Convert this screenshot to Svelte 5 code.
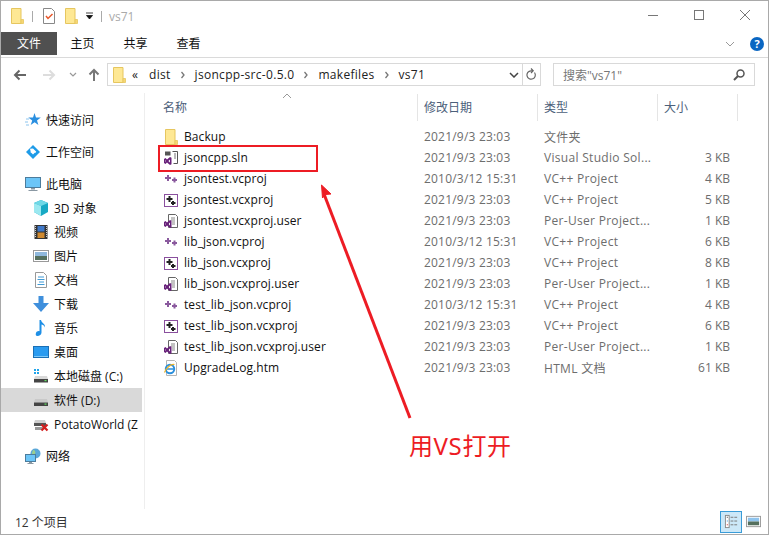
<script>
  const files = [
    { name: 'Backup', date: '2021/9/3 23:03', type: '文件夹', size: '', icon: 'folder' },
    { name: 'jsoncpp.sln', date: '2021/9/3 23:03', type: 'Visual Studio Sol...', size: '3 KB', icon: 'sln' },
    { name: 'jsontest.vcproj', date: '2010/3/12 15:31', type: 'VC++ Project', size: '4 KB', icon: 'plus' },
    { name: 'jsontest.vcxproj', date: '2021/9/3 23:03', type: 'VC++ Project', size: '5 KB', icon: 'boxplus' },
    { name: 'jsontest.vcxproj.user', date: '2021/9/3 23:03', type: 'Per-User Project...', size: '1 KB', icon: 'user' },
    { name: 'lib_json.vcproj', date: '2010/3/12 15:31', type: 'VC++ Project', size: '6 KB', icon: 'plus' },
    { name: 'lib_json.vcxproj', date: '2021/9/3 23:03', type: 'VC++ Project', size: '8 KB', icon: 'boxplus' },
    { name: 'lib_json.vcxproj.user', date: '2021/9/3 23:03', type: 'Per-User Project...', size: '1 KB', icon: 'user' },
    { name: 'test_lib_json.vcproj', date: '2010/3/12 15:31', type: 'VC++ Project', size: '4 KB', icon: 'plus' },
    { name: 'test_lib_json.vcxproj', date: '2021/9/3 23:03', type: 'VC++ Project', size: '6 KB', icon: 'boxplus' },
    { name: 'test_lib_json.vcxproj.user', date: '2021/9/3 23:03', type: 'Per-User Project...', size: '1 KB', icon: 'user' },
    { name: 'UpgradeLog.htm', date: '2021/9/3 23:03', type: 'HTML 文档', size: '61 KB', icon: 'ie' },
  ]

  const nav = [
    { label: '快速访问', icon: 'star', top: true },
    { label: '工作空间', icon: 'work', top: true },
    { label: '此电脑', icon: 'pc', top: true },
    { label: '3D 对象', icon: 'cube' },
    { label: '视频', icon: 'film' },
    { label: '图片', icon: 'pic' },
    { label: '文档', icon: 'doc' },
    { label: '下载', icon: 'down' },
    { label: '音乐', icon: 'note' },
    { label: '桌面', icon: 'desk' },
    { label: '本地磁盘 (C:)', icon: 'diskc' },
    { label: '软件 (D:)', icon: 'disk', selected: true },
    { label: 'PotatoWorld (Z', icon: 'netdisk' },
    { label: '网络', icon: 'net', top: true },
  ]
</script>

{#snippet folder(cls = 'i16')}
  <svg class={cls} viewBox="0 0 16 16">
    <path d="M2.500 .5h9.500v15H2.500z" fill="#fee894" stroke="#e6c65f"/>
    <path d="M12 11.500h2.500v4H12z" fill="#f7d774" stroke="#e6c65f" stroke-width=".8"/>
  </svg>
{/snippet}

{#snippet chev()}
  <svg class="chev" viewBox="0 0 4 8"><path d="M.5 1L3 4 .5 7" fill="none" stroke="#777" stroke-width="1.300"/></svg>
{/snippet}

{#snippet vs(x, y)}
  <path transform="translate({x} {y})" d="M0 2l1.500-1 1.500 1.600L6 0l1.500.8v6.400L6 8 3 5.400 1.500 7 0 6zM1 3.200v1.600l.9-.8zM6 2.600L4.400 4 6 5.400z" fill="#68217a"/>
{/snippet}

{#snippet fileIcon(kind)}
  {#if kind === 'folder'}
    {@render folder()}
  {:else if kind === 'sln'}
    <svg class="i16" viewBox="0 0 16 16">
      <path d="M2 1.500h5.500v4H2zM2 1.500h5.500v1.500H2z" fill="#555"/>
      <path d="M9.500 1.500h5v12h-4" fill="#fff" stroke="#555"/>
      <path d="M11 4h2M11 6h2M11 8h2" stroke="#777"/>
      {@render vs(1, 7)}
    </svg>
  {:else if kind === 'plus'}
    <svg class="i16" viewBox="0 0 16 16">
      <path d="M2 6h2V4h2v2h2v2H6v2H4V8H2z" fill="#8a5a9e"/>
      <path d="M9 8h1.500V6.500h2V8H14v2h-1.500v1.500h-2V10H9z" fill="#8a5a9e"/>
    </svg>
  {:else if kind === 'boxplus'}
    <svg class="i16" viewBox="0 0 16 16">
      <rect x="1.500" y="2.500" width="13" height="12" fill="#fff" stroke="#8a4f9e"/>
      <path d="M3.500 6h2V4h2v2h2v2h-2v2h-2V8h-2z" fill="#222"/>
      <path d="M8 10h1V9h2v1h1.500v2H11v1H9v-1H8z" fill="#222"/>
    </svg>
  {:else if kind === 'user'}
    <svg class="i16" viewBox="0 0 16 16">
      <path d="M5.500 1.500h7l2 2v11h-9z" fill="#fff" stroke="#666"/>
      <path d="M8 5h4M8 7h4M9 9h3M9 11h3" stroke="#888"/>
      {@render vs(1, 7)}
    </svg>
  {:else}
    <svg class="i16" viewBox="0 0 16 16">
      <path d="M3.500 .5h8l2 2v13h-10z" fill="#fff" stroke="#b5b5b5"/>
      <circle cx="7" cy="9" r="4.200" fill="none" stroke="#2a8fdc" stroke-width="2"/>
      <path d="M3.500 9h7" stroke="#2a8fdc" stroke-width="1.500"/>
      <path d="M1.500 12.500C3 8 8 3.500 11.500 4.500" fill="none" stroke="#f0b429" stroke-width="1.200"/>
    </svg>
  {/if}
{/snippet}

{#snippet navIcon(kind)}
  {#if kind === 'star'}
    <svg class="i16" viewBox="0 0 16 16">
      <path d="M9.500 1l1.500 4.500 4.800.1-3.800 2.900 1.400 4.500-3.800-2.700-3.900 2.700 1.500-4.500-3.900-2.900h4.700z" fill="#2a8fe0"/>
      <path d="M1 7h3M0 10h3M1 13h3" stroke="#8cc4ee"/>
    </svg>
  {:else if kind === 'work'}
    <svg class="i16" viewBox="0 0 16 16">
      <path d="M8 1l7 7-7 7-7-7z" fill="#1e9be8"/>
      <path d="M8 5.500L10.500 8 8 10.500 5.500 8z" fill="#fff"/>
      <path d="M5 4.800l3-.3 3.300 3.300-1.200 1.200L8 7 6 9z" fill="#fff"/>
    </svg>
  {:else if kind === 'pc'}
    <svg class="i16" viewBox="0 0 16 16">
      <rect x=".5" y="1.500" width="15" height="10" fill="#6cc5f7" stroke="#4c7c9c"/>
      <path d="M6 12h4v1.500H6zM3.500 14h9v1h-9z" fill="#8a98a3"/>
    </svg>
  {:else if kind === 'cube'}
    <svg class="i16" viewBox="0 0 16 16">
      <path d="M8 0l7 3v9l-7 4-7-4V3z" fill="#18a9c4"/>
      <path d="M1 3l7 3 7-3-7-3z" fill="#6fd8e6"/>
      <path d="M8 6v10l-7-4V3z" fill="#9be8f0"/>
    </svg>
  {:else if kind === 'film'}
    <svg class="i16" viewBox="0 0 16 16">
      <rect x="1.500" y="1" width="13" height="14" fill="#333"/>
      <path d="M2.500 2v12M13.500 2v12" stroke="#ccc" stroke-dasharray="1 1"/>
      <rect x="4.500" y="2" width="7" height="5.500" fill="#3f78c8"/>
      <rect x="4.500" y="8.500" width="7" height="5.500" fill="#d08a30"/>
    </svg>
  {:else if kind === 'pic'}
    <svg class="i16" viewBox="0 0 16 16">
      <rect x=".5" y="2.500" width="15" height="11" fill="#fff" stroke="#999"/>
      <rect x="2" y="4" width="12" height="4" fill="#8fb8dc"/>
      <rect x="2" y="8" width="12" height="4" fill="#55705e"/>
    </svg>
  {:else if kind === 'doc'}
    <svg class="i16" viewBox="0 0 16 16">
      <path d="M2.500 .5h8l3 3v12h-11z" fill="#fff" stroke="#999"/>
      <path d="M5 5h6M4.500 7.500h7M6 10h5M4.500 12.500h7" stroke="#3f9ad6"/>
    </svg>
  {:else if kind === 'down'}
    <svg class="i16" viewBox="0 0 16 16">
      <path d="M5.500 0h5v7H16l-8 9-8-9h5.500z" fill="#3f8fdc"/>
    </svg>
  {:else if kind === 'note'}
    <svg class="i16" viewBox="0 0 16 16">
      <path d="M6.500 0h1.500c.5 3 4.500 3.500 4 7.500-.5-2-2.500-3-3.500-3v8c0 2-2 3.500-4 3.500S2.500 14.500 3 13c.5-1.500 2-2.200 3.500-1.800z" fill="#1e8fe6"/>
    </svg>
  {:else if kind === 'desk'}
    <svg class="i16" viewBox="0 0 16 16">
      <rect x=".5" y="2.500" width="15" height="11" fill="#2a9bf0" stroke="#1a6fb5"/>
      <path d="M1 12.500h14" stroke="#7cc8f8"/>
    </svg>
  {:else if kind === 'diskc'}
    <svg class="i16" viewBox="0 0 16 16">
      <path d="M1 1h2v2H1zM4 1h2v2H4zM1 4h2v2H1zM4 4h2v2H4z" fill="#1fa4ea"/>
      <path d="M2 8h12l1 3H1z" fill="#d9d9d9"/>
      <rect x="1" y="11" width="14" height="3.500" fill="#444"/>
      <rect x="11.500" y="12" width="2" height="1.200" fill="#5fe05f"/>
    </svg>
  {:else if kind === 'disk'}
    <svg class="i16" viewBox="0 0 16 16">
      <path d="M2 7h12l1 3.500H1z" fill="#c9c9c9"/>
      <rect x="1" y="10.500" width="14" height="3.500" fill="#444"/>
      <rect x="11.500" y="11.500" width="2" height="1.200" fill="#5fe05f"/>
    </svg>
  {:else if kind === 'netdisk'}
    <svg class="i16" viewBox="0 0 16 16">
      <path d="M2 4h10l1 3H1z" fill="#cfcfcf"/>
      <rect x="1" y="7" width="12" height="3" fill="#555"/>
      <rect x="2" y="11" width="8" height="3" fill="#999"/>
      <path d="M8.500 8.500l6 6M14.500 8.500l-6 6" stroke="#d41f1f" stroke-width="2.200"/>
    </svg>
  {:else}
    <svg class="i16" viewBox="0 0 16 16">
      <circle cx="10.500" cy="5.500" r="5" fill="#5aa7d8"/>
      <path d="M8 2c2 0 3 2 2 4s-3 1-3-1z" fill="#9ccf8f"/>
      <rect x=".5" y="6.500" width="10" height="7" fill="#6cc5f7" stroke="#4c7c9c"/>
      <path d="M4 14h3v1H4zM2.500 15h6v1h-6z" fill="#8a98a3"/>
    </svg>
  {/if}
{/snippet}

<div class="window">
  <header class="titlebar">
    <div class="qat">
      {@render folder()}
      <span class="qsep first-sep"></span>
      <svg class="i16 check" viewBox="0 0 16 16">
        <path d="M2.500 .5h8l3 3v12h-11z" fill="#fff" stroke="#888"/>
        <path d="M5 8l2 2.500L11.500 6" fill="none" stroke="#e8572a" stroke-width="1.500"/>
      </svg>
      {@render folder()}
      <svg class="drop" viewBox="0 0 8 8"><path d="M0 1h7M.5 3.500h6L3.500 7z" stroke="#111" fill="#111" stroke-width=".8"/></svg>
      <span class="qsep"></span>
      <span class="title">vs71</span>
    </div>
    <div class="caption">
      <svg viewBox="0 0 46 30"><path d="M18 15.500h10" stroke="#777"/></svg>
      <svg viewBox="0 0 46 30"><rect x="18.500" y="10.500" width="9" height="9" fill="none" stroke="#777"/></svg>
      <svg viewBox="0 0 46 30"><path d="M18 10l10 10M28 10L18 20" stroke="#777" fill="none"/></svg>
    </div>
  </header>

  <div class="tabs">
    <span class="tab file">文件</span>
    <span class="tab">主页</span>
    <span class="tab">共享</span>
    <span class="tab">查看</span>
    <span class="spacer"></span>
    <svg class="ribbon-toggle" viewBox="0 0 10 6"><path d="M1 1l4 4 4-4" fill="none" stroke="#999"/></svg>
    <span class="help">?</span>
  </div>

  <div class="addressbar">
    <svg class="nav-btn" viewBox="0 0 16 16"><path d="M14 8H3M7.500 3.500L3 8l4.500 4.500" fill="none" stroke="#666" stroke-width="2"/></svg>
    <svg class="nav-btn" viewBox="0 0 16 16"><path d="M2 8h11M8.500 3.500L13 8l-4.500 4.500" fill="none" stroke="#ddd" stroke-width="2"/></svg>
    <svg class="nav-caret" viewBox="0 0 8 6"><path d="M1 1l3 3 3-3" fill="none" stroke="#999" stroke-width="1.200"/></svg>
    <svg class="nav-btn up" viewBox="0 0 16 16"><path d="M8 14V3M3.500 7.500L8 3l4.500 4.500" fill="none" stroke="#777" stroke-width="2"/></svg>
    <div class="path">
      {@render folder()}
      <span class="overflow">«</span>
      <span class="crumb">dist</span>{@render chev()}
      <span class="crumb">jsoncpp-src-0.5.0</span>{@render chev()}
      <span class="crumb">makefiles</span>{@render chev()}
      <span class="crumb">vs71</span>
      <span class="spacer"></span>
      <svg class="path-caret" viewBox="0 0 10 6"><path d="M1 1l4 4 4-4" fill="none" stroke="#444" stroke-width="1.500"/></svg>
      <span class="refresh">
        <svg viewBox="0 0 12 14"><path d="M9.500 4.500a4.200 4.200 0 1 1-3.500-1.700h1.500M6 .5L8.200 2.800 6 5" fill="none" stroke="#666" stroke-width="1.200"/></svg>
      </span>
    </div>
    <div class="search">
      <span>搜索"vs71"</span>
      <svg viewBox="0 0 14 14"><circle cx="8.500" cy="5.500" r="3.500" fill="none" stroke="#555" stroke-width="1.500"/><path d="M6 8l-4 4" stroke="#555" stroke-width="2"/></svg>
    </div>
  </div>

  <div class="main">
    <nav class="sidebar">
      {#each nav as item}
        <div class="nav-item" class:top={item.top} class:selected={item.selected}>
          {@render navIcon(item.icon)}
          <span>{item.label}</span>
        </div>
      {/each}
    </nav>

    <section class="list">
      <svg class="sort" viewBox="0 0 10 6"><path d="M1 5l4-4 4 4" fill="none" stroke="#999"/></svg>
      <div class="row head">
        <span class="col-name">名称</span>
        <span class="col-date">修改日期</span>
        <span class="col-type">类型</span>
        <span class="col-size">大小</span>
      </div>
      {#each files as f}
        <div class="row file-row">
          <span class="col-name name">{@render fileIcon(f.icon)}<span>{f.name}</span></span>
          <span class="col-date">{f.date}</span>
          <span class="col-type">{f.type}</span>
          <span class="col-size">{f.size}</span>
        </div>
      {/each}
    </section>
  </div>

  <footer class="status">
    <span>12 个项目</span>
    <span class="spacer"></span>
    <span class="view active">
      <svg viewBox="0 0 16 16">
        <rect x="1.500" y="1.500" width="4" height="13" fill="#fff" stroke="#888"/>
        <path d="M3 3h1v1H3z" fill="#333"/><path d="M3 7h1v1H3z" fill="#2a8fe0"/><path d="M3 11h1v1H3z" fill="#d41f1f"/>
        <path d="M7 3.500h3M11 3.500h3M7 7.500h3M11 7.500h3M7 11.500h3M11 11.500h3" stroke="#777"/>
      </svg>
    </span>
    <span class="view">
      <svg viewBox="0 0 16 16">
        <rect x=".5" y="2.500" width="15" height="11" fill="#fff" stroke="#999"/>
        <rect x="2" y="4" width="12" height="4" fill="#8fc4ee"/>
        <rect x="2" y="8" width="12" height="4" fill="#55705e"/>
      </svg>
    </span>
  </footer>

  <div class="redbox"></div>
  <svg class="arrow" viewBox="0 0 769 535">
    <path d="M410 418L324 194" stroke="#ed1c24" stroke-width="3" fill="none"/>
    <path d="M321.500 185L331 194 325.500 194.500 322.500 198z" fill="#ed1c24" stroke="#ed1c24" stroke-linejoin="round"/>
  </svg>
  <span class="note">用VS打开</span>
</div>

<style>
  :global(body) {
    margin: 0;
    background: #fff;
  }

  .window {
    position: relative;
    width: 769px;
    height: 535px;
    box-sizing: border-box;
    border: 1px solid #a9a9a9;
    display: flex;
    flex-direction: column;
    overflow: hidden;
    font-family: "Open Sans", "Noto Sans CJK SC", sans-serif;
    font-size: 12px;
    color: #111;
    background: #fff;
  }

  svg { display: block; flex: none; }
  .i16 { width: 16px; height: 16px; flex: none; }
  .spacer { flex: 1; }

  .titlebar {
    height: 28px;
    display: flex;
    justify-content: space-between;
    flex: none;
  }
  .qat {
    display: flex;
    align-items: center;
    padding: 2px 0 0 8px;
  }
  .qsep {
    width: 1px;
    height: 11px;
    background: #aaa;
    margin: 0 7px;
  }
  .first-sep { margin-right: 8px; }
  .check { margin-right: 6px; }
  .drop { width: 8px; height: 8px; margin: 0 0 0 7px; }
  .title { color: #aaa; }
  .caption { display: flex; margin-top: -1px; }
  .caption svg { width: 46px; height: 30px; }

  .tabs {
    height: 26px;
    display: flex;
    align-items: center;
    flex: none;
    border-bottom: 1px solid #dadada;
    padding-bottom: 2px;
    box-sizing: content-box;
  }
  .tab { width: 53px; text-align: center; line-height: 23px; margin-top: 2px; }
  .tab.file {
    width: 56px;
    background: #505050;
    color: #fff;
    margin-right: -1px;
  }
  .ribbon-toggle { width: 10px; height: 6px; margin: 4px 15px 0 0; }
  .help {
    width: 14px;
    height: 14px;
    border-radius: 50%;
    background: #0a66c2;
    color: #fff;
    font-size: 11px;
    font-weight: 700;
    line-height: 14px;
    text-align: center;
    margin: 4px 4px 0 0;
  }

  .addressbar {
    height: 23px;
    margin-top: 5px;
    display: flex;
    align-items: center;
    flex: none;
  }
  .nav-btn { width: 16px; height: 16px; margin-left: 11px; }
  .nav-btn + .nav-btn { margin-left: 13px; }
  .nav-caret { width: 8px; height: 6px; margin-left: 12px; }
  .up { margin-left: 9px; }
  .path {
    width: 429px;
    height: 21px;
    margin-left: 5px;
    border: 1px solid #d9d9d9;
    display: flex;
    align-items: center;
    padding-left: 3px;
    color: #222;
  }
  .overflow { margin-left: 5px; width: 17px; }
  .crumb { letter-spacing: .3px; }
  .chev { width: 4px; height: 8px; margin: 0 10px; }
  .path-caret { width: 10px; height: 6px; margin-right: 2px; }
  .refresh {
    width: 16px;
    height: 21px;
    margin-left: 1px;
    margin-right: 1px;
    border-left: 1px solid #d9d9d9;
    display: flex;
    align-items: center;
    justify-content: center;
  }
  .refresh svg { width: 12px; height: 14px; }
  .search {
    height: 21px;
    margin-left: 12px;
    border: 1px solid #d9d9d9;
    display: flex;
    align-items: center;
    justify-content: space-between;
    padding: 0 8px 0 9px;
    box-sizing: content-box;
    width: 183px;
    color: #777;
  }
  .search svg { width: 14px; height: 14px; }

  .main {
    flex: 1;
    display: flex;
    min-height: 0;
    margin-top: 7px;
  }
  .sidebar {
    width: 143px;
    flex: none;
    border-right: 1px solid #eee;
    padding-top: 15px;
    box-sizing: content-box;
  }
  .nav-item {
    height: 24px;
    display: flex;
    align-items: center;
    gap: 5px;
    padding-left: 32px;
    white-space: nowrap;
    overflow: hidden;
    margin-right: 2px;
  }
  .nav-item.top { padding-left: 24px; margin-top: 8px; }
  .nav-item.top:first-child { margin-top: 0; }
  .nav-item.selected { background: #d9d9d9; }

  .list {
    position: relative;
    flex: 1;
    min-width: 0;
  }
  .sort {
    position: absolute;
    left: 137px;
    top: 0;
    width: 10px;
    height: 6px;
  }
  .row {
    display: grid;
    grid-template-columns: 273px 120px 120px 80px;
    align-items: center;
  }
  .head {
    height: 28px;
    color: #4c607a;
    margin-bottom: 5px;
  }
  .head span {
    height: 27px;
    line-height: 27px;
    border-right: 1px solid #e5e5e5;
    padding-left: 6px;
  }
  .head .col-name { padding-left: 18px; }
  .file-row { height: 21px; }
  .file-row span { white-space: nowrap; }
  .name {
    display: flex;
    align-items: center;
    gap: 5px;
    padding-left: 18px;
    color: #111;
    letter-spacing: .08px;
  }
  .file-row .col-date { color: #6d6d6d; padding-left: 6px; letter-spacing: .2px; }
  .file-row .col-type { color: #6d6d6d; padding-left: 6px; letter-spacing: .3px; }
  .file-row .col-size { color: #6d6d6d; text-align: right; padding-right: 8px; }

  .status {
    height: 25px;
    flex: none;
    display: flex;
    align-items: center;
    padding: 0 8px 0 14px;
    color: #333;
  }
  .view {
    width: 14px;
    height: 22px;
    box-sizing: border-box;
    display: flex;
    align-items: center;
    justify-content: center;
    margin-left: 4px;
  }
  .view svg { width: 15px; height: 15px; }
  .view.active { width: 22px; background: #cce8f8; border: 1px solid #3a9cd8; }

  .redbox {
    position: absolute;
    left: 157px;
    top: 144px;
    width: 156px;
    height: 23px;
    border: 2px solid #ed1c24;
  }
  .arrow {
    position: absolute;
    left: -1px;
    top: -1px;
    width: 769px;
    height: 535px;
    pointer-events: none;
  }
  .note {
    position: absolute;
    left: 408px;
    top: 429px;
    font-size: 24px;
    line-height: 32px;
    letter-spacing: .6px;
    color: #ed1c24;
    font-family: "Noto Sans", "Noto Sans CJK SC", sans-serif;
  }
</style>
